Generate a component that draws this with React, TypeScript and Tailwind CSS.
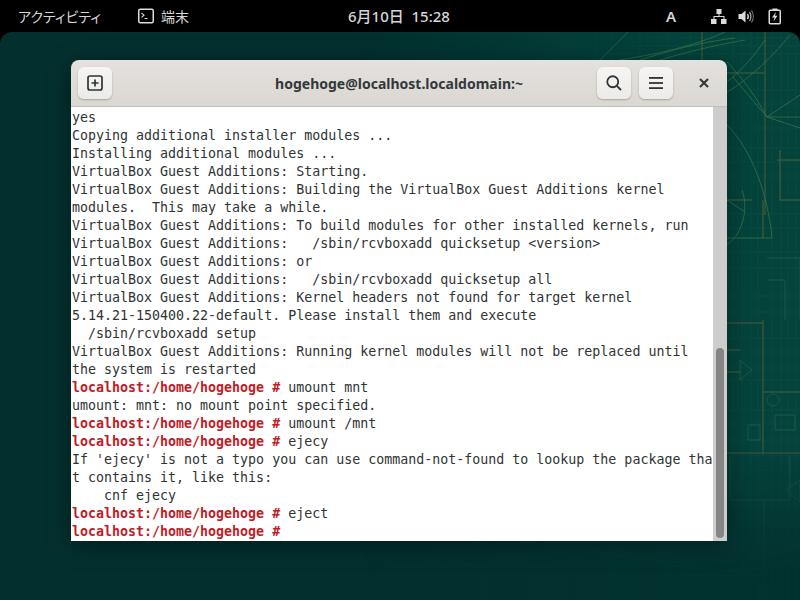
import React from 'react';

const P = 'localhost:/home/hogehoge #';

type Line = { prompt?: boolean; text: string };

const lines: Line[] = [
  { text: 'yes' },
  { text: 'Copying additional installer modules ...' },
  { text: 'Installing additional modules ...' },
  { text: 'VirtualBox Guest Additions: Starting.' },
  { text: 'VirtualBox Guest Additions: Building the VirtualBox Guest Additions kernel' },
  { text: 'modules.  This may take a while.' },
  { text: 'VirtualBox Guest Additions: To build modules for other installed kernels, run' },
  { text: 'VirtualBox Guest Additions:   /sbin/rcvboxadd quicksetup <version>' },
  { text: 'VirtualBox Guest Additions: or' },
  { text: 'VirtualBox Guest Additions:   /sbin/rcvboxadd quicksetup all' },
  { text: 'VirtualBox Guest Additions: Kernel headers not found for target kernel' },
  { text: '5.14.21-150400.22-default. Please install them and execute' },
  { text: '  /sbin/rcvboxadd setup' },
  { text: 'VirtualBox Guest Additions: Running kernel modules will not be replaced until' },
  { text: 'the system is restarted' },
  { prompt: true, text: ' umount mnt' },
  { text: 'umount: mnt: no mount point specified.' },
  { prompt: true, text: ' umount /mnt' },
  { prompt: true, text: ' ejecy' },
  { text: "If 'ejecy' is not a typo you can use command-not-found to lookup the package tha" },
  { text: 't contains it, like this:' },
  { text: '    cnf ejecy' },
  { prompt: true, text: ' eject' },
  { prompt: true, text: '' },
];

const gridX = [560, 578, 596, 612, 640, 668, 690, 712, 733, 742, 751, 758, 772, 781, 788, 796];
const gridY = [38, 46, 54, 90, 104, 128, 148, 162, 176, 214, 228, 252, 268, 296, 312, 338, 352, 368, 380, 410, 424, 440, 470, 486, 504, 520];

const Blueprint = () => (
  <svg className="absolute inset-0" width="800" height="568" viewBox="0 32 800 568" fill="none">
    <defs>
      <linearGradient id="fadeX" x1="0" x2="1" y1="0" y2="0">
        <stop offset="0.55" stopColor="#fff" stopOpacity="0" />
        <stop offset="0.85" stopColor="#fff" stopOpacity="1" />
      </linearGradient>
      <linearGradient id="tintX" x1="0" x2="1" y1="0" y2="0">
        <stop offset="0.45" stopColor="#04433c" stopOpacity="0" />
        <stop offset="0.85" stopColor="#04433c" stopOpacity="1" />
      </linearGradient>
      <linearGradient id="fadeY" x1="0" x2="0" y1="0" y2="1">
        <stop offset="0.72" stopColor="#fff" stopOpacity="1" />
        <stop offset="0.94" stopColor="#fff" stopOpacity="0.1" />
      </linearGradient>
      <mask id="my">
        <rect x="0" y="32" width="800" height="568" fill="url(#fadeY)" />
      </mask>
      <mask id="mx">
        <rect x="0" y="32" width="800" height="568" fill="url(#fadeX)" />
      </mask>
    </defs>
    <g mask="url(#my)">
      <rect x="0" y="32" width="800" height="568" fill="url(#tintX)" />
      <g mask="url(#mx)">
        {/* fine grid */}
        <g stroke="#3b8a68" strokeWidth="1" opacity="0.1">
          {gridX.map((x) => <path key={x} d={`M${x} 32V600`} />)}
          {gridY.map((y) => <path key={y} d={`M560 ${y}H800`} />)}
        </g>
        {/* arcs and diagonals */}
        <g stroke="#4a8a52" strokeWidth="1" opacity="0.55">
          <path d="M733 77L767 117L800 128M767 117L800 95M767 117C755 95 742 78 727 62M767 117H800" />
          <path d="M727 125C752 150 768 195 772 238H727M727 245C745 232 748 205 742 190M727 200L745 212" />
          <path d="M600 60L628 32M620 60C650 55 690 48 725 32M640 60C665 52 700 42 735 38M660 60C680 54 710 46 745 40" />
          <path d="M727 92C745 82 770 60 790 35M727 82C740 72 755 55 765 40" />
        </g>
        {/* walls */}
        <g stroke="#66693c" strokeWidth="1.5" opacity="0.5">
          <path d="M702 32V60M727 73H765M765 32V215M727 200H752M763 200V238" />
          <path d="M763 320V455M763 392H800M727 323H763M727 453H800M780 150V200H800M777 160H800" />
          <path d="M727 350H740M727 372H740" />
        </g>
        {/* lower plan */}
        <g stroke="#4a8a62" strokeWidth="1" opacity="0.3">
          <path d="M767 258H800V320M767 280H785V320M740 360L752 370L740 380ZM775 415H795V430H775ZM748 425H760V440H748ZM786 490L800 480V502Z" />
          <circle cx="773" cy="400" r="6" />
          <path d="M560 541C640 568 740 568 800 546M600 541C680 578 750 576 800 558M764 500V600M680 575H800M730 455V500H790V455" />
          <circle cx="700" cy="592" r="6" />
          <circle cx="765" cy="592" r="6" />
        </g>
      </g>
    </g>
  </svg>
);

const RoundBtn = ({ children }: { children: React.ReactNode }) => (
  <button className="flex h-8 w-[34px] items-center justify-center rounded-[6px] bg-gradient-to-b from-[#f6f5f3] to-[#edebe8] shadow-[0_1px_2px_rgba(0,0,0,0.25)]">
    {children}
  </button>
);

export default function App() {
  return (
    <div className="flex h-[600px] w-[800px] flex-col overflow-hidden bg-black" style={{ fontFamily: '"Noto Sans", "Noto Sans CJK JP", sans-serif' }}>
      {/* top bar */}
      <div className="relative flex h-8 shrink-0 items-center text-[14px] text-[#d6d6d6]">
        <span className="ml-[18px] w-[84px] whitespace-nowrap text-[14px] [font-feature-settings:'palt']" style={{ fontFamily: '"Noto Sans CJK JP", sans-serif' }}>アクティビティ</span>
        <svg className="ml-[36px]" width="16" height="16" viewBox="0 0 16 16" fill="none">
          <rect x="0.75" y="1.25" width="14.5" height="13.5" rx="1.5" stroke="#dcdcdc" strokeWidth="1.5" />
          <path d="M3.5 5L6 7.2L3.5 9.4" stroke="#dcdcdc" strokeWidth="1.1" />
          <path d="M6.5 10.5H9.5" stroke="#dcdcdc" strokeWidth="1" />
        </svg>
        <span className="ml-[7px]" style={{ fontFamily: '"Noto Sans CJK JP", sans-serif' }}>端末</span>
        <span className="absolute left-[348px] top-[6px] text-[15px] leading-5 font-medium">6月10日&nbsp; 15:28</span>
        <span className="absolute left-[666px] top-[6px] text-[15px] leading-5 font-semibold">A</span>
        <svg className="absolute left-[711px] top-[9px]" width="16" height="16" viewBox="0 0 16 16" fill="#dcdcdc">
          <rect x="5.5" y="0" width="5" height="5" />
          <rect x="0" y="10" width="5.5" height="5" />
          <rect x="10" y="10" width="5.5" height="5" />
          <path d="M7.5 5H8.5V7H13.5V10H12.5V8H3.5V10H2.5V7H7.5Z" />
        </svg>
        <svg className="absolute left-[738px] top-[9px]" width="16" height="16" viewBox="0 0 16 16" fill="none">
          <path d="M0.5 5H3.5L7.5 1.5V13.5L3.5 10H0.5Z" fill="#dcdcdc" />
          <path d="M9.5 5C10.5 6.5 10.5 8.5 9.5 10" stroke="#dcdcdc" strokeWidth="1.3" />
          <path d="M11.5 3C13.3 5.5 13.3 9.5 11.5 12" stroke="#a0a0a0" strokeWidth="1.3" />
          <path d="M13.5 1.5C15.8 5 15.8 10 13.5 13.5" stroke="#7a7a7a" strokeWidth="1.2" />
        </svg>
        <svg className="absolute left-[768px] top-[8px]" width="14" height="17" viewBox="0 0 14 17" fill="none">
          <path d="M4.5 0.5H9.5V2H4.5Z" fill="#dcdcdc" />
          <rect x="1.25" y="2.25" width="11" height="13.5" rx="1" stroke="#dcdcdc" strokeWidth="1.5" />
          <path d="M8 4L4 9.5H6.5L5.5 13.5L9.5 7.8H7Z" fill="#dcdcdc" />
        </svg>
      </div>

      {/* desktop */}
      <div className="relative flex-1 overflow-hidden rounded-t-[12px] bg-[#03302f]">
        <Blueprint />

        {/* terminal window */}
        <div className="absolute left-[71px] top-[28px] flex h-[481px] w-[656px] flex-col overflow-hidden rounded-t-[8px] shadow-[0_4px_24px_rgba(0,0,0,0.4)]">
          <div className="grid h-[47px] shrink-0 grid-cols-[1fr_auto_1fr] items-center border-b border-[#c3bfb9] bg-gradient-to-b from-[#e4e1de] to-[#dbd8d3]">
            <div className="flex pl-[7px]">
              <RoundBtn>
                <svg width="16" height="16" viewBox="0 0 16 16" fill="none">
                  <rect x="1" y="1" width="14" height="14" rx="2" stroke="#2e3436" strokeWidth="1.7" />
                  <path d="M8 4.5V11.5M4.5 8H11.5" stroke="#2e3436" strokeWidth="1.7" />
                </svg>
              </RoundBtn>
            </div>
            <div className="text-center text-[14px] font-bold text-[#33383a]">hogehoge@localhost.localdomain:~</div>
            <div className="flex items-center justify-end gap-2">
              <RoundBtn>
                <svg width="16" height="16" viewBox="0 0 16 16" fill="none">
                  <circle cx="6.75" cy="6.75" r="5.5" stroke="#2e3436" strokeWidth="1.8" />
                  <path d="M10.8 10.8L15 15" stroke="#2e3436" strokeWidth="1.8" />
                </svg>
              </RoundBtn>
              <RoundBtn>
                <svg width="16" height="14" viewBox="0 0 16 14" fill="#2e3436">
                  <rect x="1" y="1" width="14" height="1.8" />
                  <rect x="1" y="6.1" width="14" height="1.8" />
                  <rect x="1" y="11.2" width="14" height="1.8" />
                </svg>
              </RoundBtn>
              <div className="-ml-2 flex h-8 w-[54px] items-center justify-center pl-[8px]">
                <svg width="10" height="10" viewBox="0 0 10 10" fill="none">
                  <path d="M1 1L9 9M9 1L1 9" stroke="#2e3436" strokeWidth="2" />
                </svg>
              </div>
            </div>
          </div>

          <div className="flex min-h-0 flex-1 bg-white">
            <pre className="min-w-0 flex-1 overflow-hidden pl-px pt-[2px] text-[13.3px] leading-[18px] text-[#2e3436]" style={{ fontFamily: '"DejaVu Sans Mono", monospace' }}>
              {lines.map((l, i) => (
                <div key={i} className="h-[18px]">
                  {l.prompt && <span className="font-bold text-[#c01c28]">{P}</span>}
                  {l.text}
                </div>
              ))}
            </pre>
            <div className="flex w-[14px] shrink-0 flex-col justify-end bg-[#cdcdcd] px-[3px] pb-[3px]">
              <div className="h-[190px] rounded-full bg-[#858585]" />
            </div>
          </div>
        </div>
      </div>
    </div>
  );
}
